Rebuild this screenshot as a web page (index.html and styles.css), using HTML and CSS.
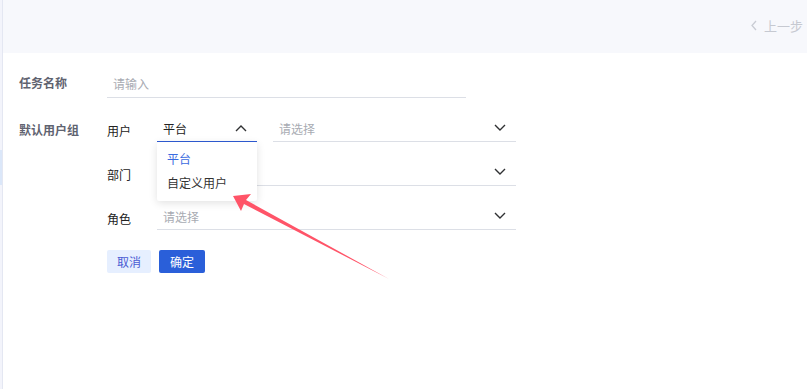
FILE: index.html
```html
<!DOCTYPE html>
<html lang="zh-CN">
<head>
    <meta charset="UTF-8">
    <meta name="viewport" content="width=device-width, initial-scale=1.0">
    <title>任务配置</title>
    <link rel="stylesheet" href="styles.css">
</head>
<body>

<div class="page">
    <aside class="side">
        <div class="side-mark"></div>
    </aside>

    <main class="main">
        <header class="topbar">
            <a class="back" href="#">
                <svg width="8" height="11" viewBox="0 0 8 11"><path d="M6 1 L2 5.5 L6 10" fill="none" stroke="#c9ccd4" stroke-width="1.3"/></svg>
                <span>上一步</span>
            </a>
        </header>

        <form class="task-form">
            <div class="form-row">
                <label class="form-label">任务名称</label>
                <div class="field field-name">
                    <span class="placeholder">请输入</span>
                </div>
            </div>

            <div class="form-row form-group">
                <label class="form-label group-label">默认用户组</label>
                <div class="group">
                    <div class="group-row">
                        <span class="sub-label">用户</span>
                        <div class="field field-type active">
                            <span class="value">平台</span>
                            <svg class="chev" width="12" height="8" viewBox="0 0 12 8"><path d="M1 7 L6 2 L11 7" fill="none" stroke="#303133" stroke-width="1.4"/></svg>
                            <ul class="dropdown">
                                <li class="selected">平台</li>
                                <li>自定义用户</li>
                            </ul>
                        </div>
                        <div class="field field-pick">
                            <span class="placeholder">请选择</span>
                            <svg class="chev" width="12" height="8" viewBox="0 0 12 8"><path d="M1 1 L6 6 L11 1" fill="none" stroke="#303133" stroke-width="1.4"/></svg>
                        </div>
                    </div>
                    <div class="group-row">
                        <span class="sub-label">部门</span>
                        <div class="field field-wide">
                            <span class="placeholder"></span>
                            <svg class="chev" width="12" height="8" viewBox="0 0 12 8"><path d="M1 1 L6 6 L11 1" fill="none" stroke="#303133" stroke-width="1.4"/></svg>
                        </div>
                    </div>
                    <div class="group-row">
                        <span class="sub-label">角色</span>
                        <div class="field field-wide">
                            <span class="placeholder">请选择</span>
                            <svg class="chev" width="12" height="8" viewBox="0 0 12 8"><path d="M1 1 L6 6 L11 1" fill="none" stroke="#303133" stroke-width="1.4"/></svg>
                        </div>
                    </div>
                    <div class="actions">
                        <button type="button" class="btn btn-cancel">取消</button>
                        <button type="button" class="btn btn-ok">确定</button>
                    </div>
                </div>
            </div>
        </form>

        <!-- callout arrow pointing at the dropdown -->
        <svg class="callout" width="807" height="389" viewBox="0 0 807 389">
            <polygon points="233,196 251,194 246,200 389,279 244,204 241,211" fill="#ff5468"/>
        </svg>
    </main>
</div>

</body>
</html>
```

FILE: styles.css
```css
body {
    margin: 0;
    font-family: "Noto Sans CJK SC", "Noto Sans", sans-serif;
    font-size: 12px;
    color: #303133;
    background: #fff;
}

.page {
    display: flex;
    height: 389px;
    overflow: hidden;
}

.side {
    width: 2px;
    flex-shrink: 0;
    background: #f3f4fb;
    border-right: 1px solid #e4e7f2;
    padding-top: 150px;
}

.side-mark {
    height: 35px;
    background: #dbe7f9;
}

.main {
    flex: 1;
    position: relative;
}

.topbar {
    height: 53px;
    background: #f7f8fc;
    display: flex;
    justify-content: flex-end;
    align-items: center;
    padding-right: 4px;
    padding-bottom: 2px;
    box-sizing: border-box;
}

.back {
    display: flex;
    align-items: center;
    gap: 6px;
    color: #c6c9d1;
    text-decoration: none;
    font-size: 13px;
}

.task-form {
    padding: 16px 0 0 16px;
}

.form-row {
    display: flex;
    align-items: flex-start;
    margin-bottom: 15px;
}

.form-label {
    width: 88px;
    flex-shrink: 0;
    line-height: 28px;
    font-weight: bold;
    color: #5f6370;
}

.group-label {
    padding-top: 3px;
}

.group {
    display: flex;
    flex-direction: column;
    gap: 15px;
}

.group-row {
    display: flex;
    align-items: flex-start;
}

.sub-label {
    width: 50px;
    line-height: 29px;
    height: 29px;
    padding-top: 3px;
    box-sizing: border-box;
    color: #222;
}

.field {
    position: relative;
    height: 28px;
    border-bottom: 1px solid #dcdfe6;
    display: flex;
    align-items: center;
    justify-content: space-between;
    padding: 0 10px 0 6px;
    box-sizing: content-box;
}

.group .field {
    height: 26px;
    padding-top: 2px;
}

.field-name {
    width: 359px;
    padding: 0 0 0 6px;
    box-sizing: border-box;
    height: 29px;
}

.field-type {
    width: 84px;
    margin-right: 16px;
    border-bottom-color: #2f5bd4;
}

.field-pick {
    width: 227px;
}

.field-wide {
    width: 343px;
}

.placeholder {
    color: #a8abb2;
}

.value {
    color: #222;
}

.chev {
    display: block;
}

.dropdown {
    position: absolute;
    left: 0;
    top: 29px;
    width: 100px;
    margin: 0;
    padding: 5px 0 6px;
    list-style: none;
    background: #fff;
    box-shadow: 0 2px 8px rgba(0, 0, 0, 0.12);
    border-radius: 2px;
    z-index: 2;
}

.dropdown li {
    line-height: 24px;
    padding-left: 10px;
    color: #333;
}

.dropdown li.selected {
    color: #3a6be0;
}

.actions {
    display: flex;
    gap: 8px;
    margin-top: 5px;
}

.btn {
    height: 23px;
    padding: 0 10px;
    border: none;
    border-radius: 2px;
    font-family: inherit;
    font-size: 12px;
    cursor: pointer;
}

.btn-cancel {
    background: #e6efff;
    color: #4a5cd3;
}

.btn-ok {
    background: #2a5fd9;
    color: #fff;
    padding: 0 11px;
}

.callout {
    position: absolute;
    left: -3px;
    top: 0;
    pointer-events: none;
    z-index: 3;
}
```
